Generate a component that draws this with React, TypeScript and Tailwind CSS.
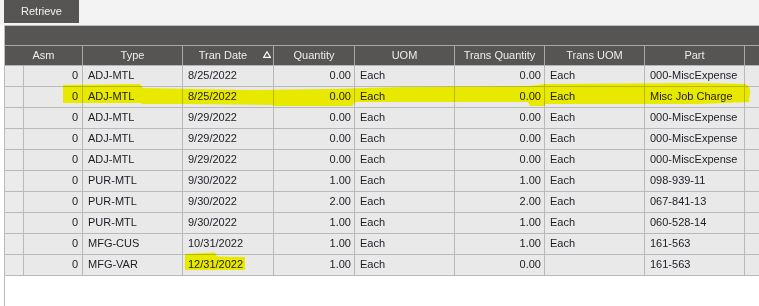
const COLS: Array<{ key: string; label: string; right?: boolean }> = [
  { key: 'type', label: 'Type' },
  { key: 'date', label: 'Tran Date' },
  { key: 'qty', label: 'Quantity', right: true },
  { key: 'uom', label: 'UOM' },
  { key: 'tqty', label: 'Trans Quantity', right: true },
  { key: 'tuom', label: 'Trans UOM' },
  { key: 'part', label: 'Part' },
]

const ROWS: Array<Record<string, string>> = [
  { asm: '0', type: 'ADJ-MTL', date: '8/25/2022', qty: '0.00', uom: 'Each', tqty: '0.00', tuom: 'Each', part: '000-MiscExpense' },
  { asm: '0', type: 'ADJ-MTL', date: '8/25/2022', qty: '0.00', uom: 'Each', tqty: '0.00', tuom: 'Each', part: 'Misc Job Charge' },
  { asm: '0', type: 'ADJ-MTL', date: '9/29/2022', qty: '0.00', uom: 'Each', tqty: '0.00', tuom: 'Each', part: '000-MiscExpense' },
  { asm: '0', type: 'ADJ-MTL', date: '9/29/2022', qty: '0.00', uom: 'Each', tqty: '0.00', tuom: 'Each', part: '000-MiscExpense' },
  { asm: '0', type: 'ADJ-MTL', date: '9/29/2022', qty: '0.00', uom: 'Each', tqty: '0.00', tuom: 'Each', part: '000-MiscExpense' },
  { asm: '0', type: 'PUR-MTL', date: '9/30/2022', qty: '1.00', uom: 'Each', tqty: '1.00', tuom: 'Each', part: '098-939-11' },
  { asm: '0', type: 'PUR-MTL', date: '9/30/2022', qty: '2.00', uom: 'Each', tqty: '2.00', tuom: 'Each', part: '067-841-13' },
  { asm: '0', type: 'PUR-MTL', date: '9/30/2022', qty: '1.00', uom: 'Each', tqty: '1.00', tuom: 'Each', part: '060-528-14' },
  { asm: '0', type: 'MFG-CUS', date: '10/31/2022', qty: '1.00', uom: 'Each', tqty: '1.00', tuom: 'Each', part: '161-563' },
  { asm: '0', type: 'MFG-VAR', date: '12/31/2022', qty: '1.00', uom: 'Each', tqty: '0.00', tuom: '', part: '161-563' },
]

const GRID = 'grid grid-cols-[19px_59px_100px_91px_81px_100px_90px_100px_100px_1fr]'

export default function App() {
  return (
    <div className="relative w-[759px] h-[306px] overflow-hidden bg-white flex flex-col font-['Liberation_Sans',Arial,sans-serif] text-[11px]">
      <div className="h-[25px] shrink-0 bg-[#f3f3f4] pl-1">
        <button className="w-[75px] h-[23px] bg-[#575553] text-[#f2f2f2] text-[11px]">Retrieve</button>
      </div>

      <div className="ml-1 flex-1 border-l border-t border-[#bdbdbd]">
        <div className="h-[20px] bg-[#575553] border-b border-[#a8a8a8]" />

        <div className={`${GRID} h-[20px] bg-[#575553] border-b border-[#b5b5b5] text-[#ececf0]`}>
          <div className="col-span-2 border-r border-[#a8a8a8] flex items-center justify-center">Asm</div>
          {COLS.map(c => (
            <div key={c.key} className="border-r border-[#a8a8a8] flex items-center">
              <span className="flex-1 text-center">{c.label}</span>
              {c.key === 'date' && (
                <svg width="8" height="7" viewBox="0 0 8 7" className="mr-[2px] mb-[2px]">
                  <path d="M4 0.8 L7.3 6.3 L0.7 6.3 Z" fill="none" stroke="#ffffff" strokeWidth="1.2" />
                </svg>
              )}
            </div>
          ))}
          <div />
        </div>

        {ROWS.map((r, i) => (
          <div key={i} className={`${GRID} h-[21px] bg-[#e9e9e9] border-b border-[#b9b9b9] text-[#1c1c24]`}>
            <div className="border-r border-[#b9b9b9] bg-[#ebebeb]" />
            <div className="border-r border-[#b9b9b9] flex items-center justify-end pr-1 pb-[2px]">{r.asm}</div>
            {COLS.map(c => (
              <div
                key={c.key}
                className={`border-r border-[#b9b9b9] flex items-center pb-[2px] whitespace-nowrap overflow-hidden ${c.right ? 'justify-end pr-[3px]' : 'pl-[5px]'}`}
              >
                {r[c.key]}
              </div>
            ))}
            <div />
          </div>
        ))}
      </div>

      <svg className="absolute left-0 top-0 pointer-events-none mix-blend-multiply" width="759" height="306">
        <path
          d="M63,85 L140,84 L143,88 L250,90 L330,89 L400,87 L530,86 L545,84 L700,83 L745,84 Q751,86 750,94 L749,102 L700,104 L545,104 L545,106 L530,106 L528,102 L400,102 L355,102 L352,106 L275,106 L273,105 L180,104 L143,104 L140,103 L63,103 Z"
          fill="#ffff00"
        />
        <path d="M185,254 L215,252.5 L217,256.5 L245,257 L245,270 L185,270 Z" fill="#ffff00" />
      </svg>
    </div>
  )
}
